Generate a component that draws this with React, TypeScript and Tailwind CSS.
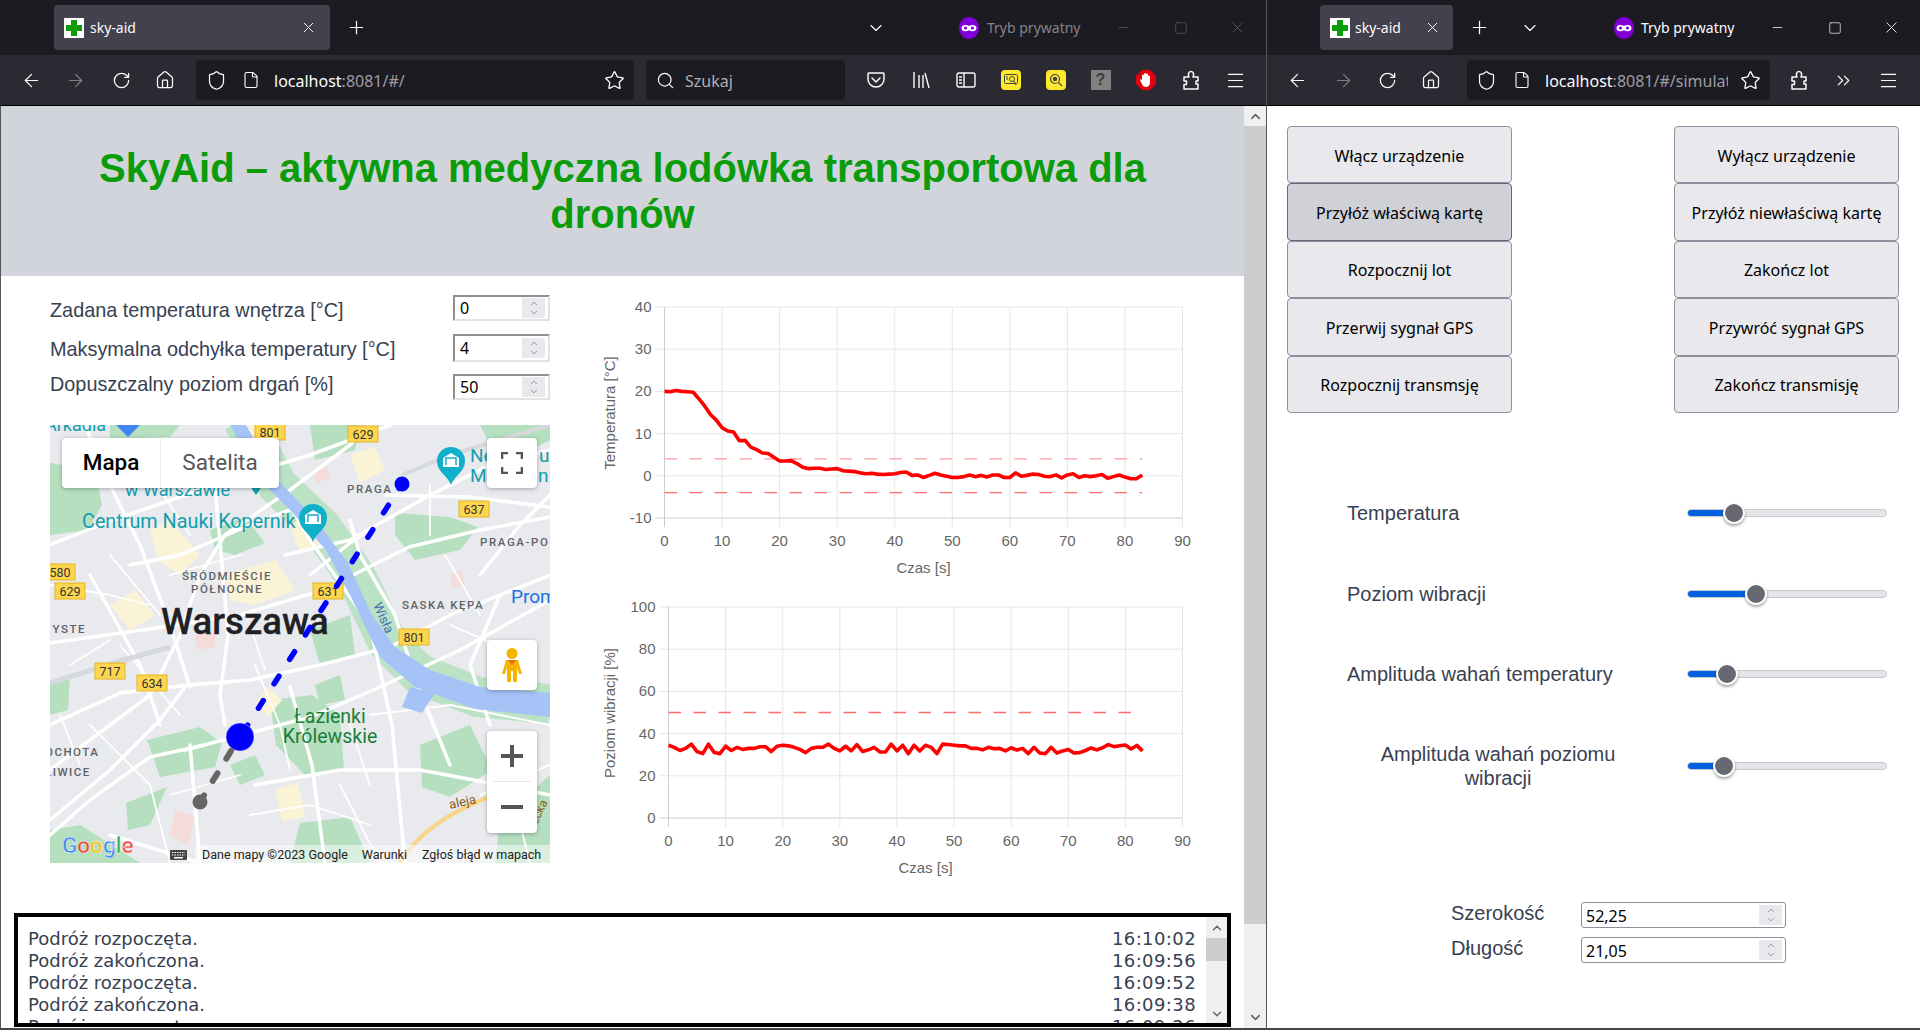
import { ChevronDown, ChevronUp, ChevronsRight, File, Home, Menu, Minus, Plus, RotateCw, Search, Shield, Square, Star, X, ArrowLeft, ArrowRight } from "lucide-react";
import type { ReactNode } from "react";

const tempData = [20, 19.9, 20.2, 20, 19.9, 19.8, 18.2, 16.5, 14.5, 13.2, 11.4, 10.6, 10.4, 8.3, 8.4, 6.8, 6.2, 5.4, 5.3, 4.4, 3.5, 3.5, 3.6, 2.9, 2, 1.7, 1.8, 1.8, 1.5, 1.6, 1.7, 1.2, 1.1, 1, 0.7, 0.5, 0.6, 0.4, 0.3, 0.4, 0.5, 0.8, 0.9, 0.1, 0.2, -0.4, 0.1, 0.6, 0.2, -0.1, -0.4, -0.4, -0.2, 0.2, -0.2, 0.1, -0.3, 0.2, 0.2, -0.4, -0.4, 0.7, -0.1, 0.1, 0.4, 0.3, -0.1, -0.2, 0.2, -0.5, 0.2, 0.5, -0.4, 0, -0.2, 0, 0.3, -0.6, -0.2, 0.2, -0.3, -0.7, -0.7, 0.2];
const vibrationData = [34.5, 33.5, 32, 33, 35, 31.5, 30.5, 35, 31, 30.5, 34, 32, 33.5, 32.5, 33, 33, 33.8, 33.8, 31.5, 34, 34.5, 34.2, 33.5, 32.5, 31, 33, 33.5, 33.5, 35, 33, 31.8, 34, 31.8, 34.8, 31.5, 32.3, 33.5, 31.3, 31.3, 35, 31.8, 34.5, 30.5, 34.5, 31.8, 34.5, 33.5, 30.5, 35, 34.8, 34.5, 34.2, 34.2, 33, 33, 32.3, 33.5, 32.8, 33, 31.8, 33.3, 32.2, 33, 30.5, 33.5, 30.8, 30.5, 33.5, 30.8, 31.8, 32.5, 30.8, 31, 32, 33.2, 32.3, 33.3, 34.8, 33.8, 34.2, 34.6, 32.7, 34.4, 31.8];

const xTicks = [0, 10, 20, 30, 40, 50, 60, 70, 80, 90];

type ChartProps = {
  data: number[];
  yTicks: number[];
  limits: { value: number; color: string; until: number }[];
  yTitle: string;
  left: number;
  top: number;
  titleY: number;
  height: number;
};

const Chart = ({ data, yTicks, limits, yTitle, left, top, titleY, height }: ChartProps) => {
  const right = 592.5;
  const bottom = top + 211;
  const max = yTicks[0];
  const min = yTicks[yTicks.length - 1];
  const sx = (v: number) => left + (v / 90) * (right - left);
  const sy = (v: number) => top + ((max - v) / (max - min)) * (bottom - top);
  const points = data.map((v, i) => `${sx(i)},${sy(v)}`).join(" ");
  return (
    <svg width="620" height={height} className="block font-['Liberation_Sans',sans-serif]">
      {yTicks.map((t) => (
        <g key={t}>
          <line x1={left - 9} x2={right} y1={sy(t)} y2={sy(t)} stroke={t === min ? "#cccccc" : "#e6e6e6"} />
          <text x={left - 13} y={sy(t) + 5} textAnchor="end" fontSize="15" fill="#666">{t}</text>
        </g>
      ))}
      {xTicks.map((t) => (
        <g key={t}>
          <line x1={sx(t)} x2={sx(t)} y1={top} y2={bottom + 9} stroke={t === 0 ? "#cccccc" : "#e6e6e6"} />
          <text x={sx(t)} y={bottom + 28} textAnchor="middle" fontSize="15" fill="#666">{t}</text>
        </g>
      ))}
      {limits.map((l) => (
        <line key={l.value} x1={sx(0)} x2={sx(l.until)} y1={sy(l.value)} y2={sy(l.value)} stroke={l.color} strokeWidth="1.3" strokeDasharray="12.5 12.5" />
      ))}
      <polyline points={points} fill="none" stroke="#ff0000" strokeWidth="3.6" strokeLinejoin="round" />
      <text x={(left + right) / 2} y={bottom + 55} textAnchor="middle" fontSize="15" fill="#666">Czas [s]</text>
      <text transform={`translate(25 ${titleY}) rotate(-90)`} textAnchor="middle" fontSize="15" fill="#666">{yTitle}</text>
    </svg>
  );
};

const shields = [
  ["801", 220, 7], ["629", 313, 9], ["637", 424, 84], ["580", 10, 147], ["629", 20, 166],
  ["631", 278, 166], ["801", 364, 212], ["717", 60, 246], ["634", 102, 258],
] as const;

const roads = [
  "0,218 100,204 190,190 273,165 359,122 430,105 500,92",
  "0,300 70,268 140,260 200,255 270,240 340,222 400,190 500,150",
  "0,345 60,300 100,270 130,210 150,150 175,110 240,65 300,20 320,0",
  "135,325 200,308 260,292 330,262 410,225 500,175",
  "140,320 150,438",
  "165,60 172,140 178,210 170,270 175,300",
  "35,0 60,60 90,120 120,200 140,262",
  "190,0 228,62 262,118 320,200 342,300 355,438",
  "240,262 262,340 275,438",
  "0,120 60,96 130,72 210,45 260,30 340,0",
  "300,95 310,130 345,190 368,262 400,340",
  "235,130 300,115 380,70 440,40 500,25",
  "335,70 420,72 500,82",
  "430,150 470,100 500,70",
  "0,395 60,345 110,295 135,262",
  "155,320 100,332 40,375 0,410",
  "205,360 290,345 370,345 440,358 500,370",
  "60,410 150,438",
  "80,140 130,130 200,100 240,85",
  "40,150 90,240 110,300",
  "450,170 420,240 440,300",
  "260,150 300,118 320,105",
];

const minorRoads = [
  "0,160 60,170 100,180", "205,240 230,300 240,345", "100,50 140,110", "395,130 430,190", "320,290 400,280 500,300",
  "40,300 100,360 120,438", "290,360 330,438", "200,390 260,380 320,400", "380,110 380,60", "450,320 480,438", "70,220 130,290",
  "120,150 190,130", "60,130 110,190", "200,200 215,245", "20,240 60,215", "400,200 470,230", "440,60 470,20",
  "10,290 30,340", "120,370 190,350", "300,300 320,360",
];

const CityMap = () => (
  <svg width="500" height="438" viewBox="0 0 500 438" className="block font-['Roboto',sans-serif]">
    <rect width="500" height="438" fill="#e8eaed" />
    {/* parki */}
    <g fill="#b5dfbf">
      <path d="M0 38 L45 45 L52 80 L38 105 L0 110Z" />
      <path d="M60 0 L130 0 L120 12 L60 14Z" />
      <path d="M160 105 L195 92 L215 118 L185 130 L165 125Z" />
      <path d="M345 88 L400 92 L428 102 L410 125 L365 135 L345 110Z" />
      <path d="M220 275 L262 270 L290 290 L294 345 L255 350 L226 320Z" />
      <path d="M97 315 L150 302 L172 318 L165 342 L110 352Z" />
      <path d="M76 378 L117 362 L100 400 L78 405Z" />
      <path d="M370 320 L420 300 L442 345 L400 372 L372 362Z" />
      <path d="M260 0 L310 0 L305 25 L265 35Z" />
      <path d="M0 405 L30 400 L90 438 L0 438Z" />
      <path d="M260 205 L300 190 L305 230 L270 240Z" />
      <path d="M180 340 L205 330 L215 350 L190 360Z" />
      <path d="M430 0 L500 0 L500 15 L450 40Z" />
      <path d="M250 398 L300 392 L320 438 L240 438Z" />
      <path d="M450 395 L500 350 L500 438 L445 438Z" />
      <path d="M0 258 L20 250 L18 285 L0 290Z" />
      <path d="M265 260 L290 250 L295 275 L270 280Z" />
    </g>
    {/* okolice rzeki */}
    <polyline points="193,-5 228,61 272,103 307,153 338,218 369,249 428,272 500,279" fill="none" stroke="#bbe2c5" strokeWidth="40" />
    <g fill="#fbf3d6">
      <path d="M60 180 L85 165 L105 190 L80 205Z" />
      <path d="M100 105 L120 95 L150 130 L130 150 L108 135Z" />
      <path d="M175 150 L225 135 L245 165 L205 180 L180 175Z" />
      <path d="M240 100 L258 90 L272 120 L250 128Z" />
      <path d="M300 30 L325 22 L335 45 L310 58Z" />
      <path d="M218 262 L232 275 L218 292 L205 278Z" />
      <path d="M225 365 L248 358 L255 392 L232 396Z" />
      <path d="M195 0 L218 0 L218 18 L198 20Z" />
    </g>
    <g fill="#f6dcd8">
      <path d="M145 210 L165 206 L165 222 L147 225Z" />
      <path d="M262 45 L276 40 L280 54 L266 58Z" />
      <path d="M400 150 L412 146 L415 160 L402 162Z" />
      <path d="M125 385 L145 392 L138 420 L120 410Z" />
    </g>
    <g fill="none" stroke="#ffffff" strokeLinecap="round" strokeLinejoin="round">
      {roads.map((r) => <polyline key={r} points={r} strokeWidth="3.5" />)}
      {minorRoads.map((r) => <polyline key={r} points={r} strokeWidth="1.8" />)}
    </g>
    <polyline points="0,258 70,236 120,222" fill="none" stroke="#d5d8dc" strokeWidth="5" />
    <polyline points="352,50 400,30 500,0" fill="none" stroke="#d5d8dc" strokeWidth="4" />
    {/* Wisła */}
    <path d="M193 -5 L228 55 L266 95 L298 138 L322 190 L345 222 L380 245 L430 262 L500 268 L500 292 L425 284 L365 262 L330 232 L300 170 L276 125 L240 85 L210 55 L180 0Z" fill="#a5c3f7" />
    <path d="M360 262 L385 268 L372 288 L352 282Z" fill="#a5c3f7" />
    <path d="M350 438 Q375 395 445 370" fill="none" stroke="#f9d48b" strokeWidth="4" />
    <path d="M430 370 L500 340" fill="none" stroke="#ffffff" strokeWidth="2" />

    {shields.map(([label, x, y]) => (
      <g key={`${label}${x}`}>
        <rect x={x - 15} y={y - 8} width="30" height="16" fill="#fdd64f" stroke="#e6b422" />
        <text x={x} y={y + 4.5} textAnchor="middle" fontSize="12.5" fill="#333">{label}</text>
      </g>
    ))}

    <text x="-5" y="6" fontSize="18" fill="#129eaf">Arkadia</text>
    <path d="M66 0 H90 L78 12Z" fill="#4285f4" />
    <text x="75" y="71" fontSize="18" fill="#129eaf">w Warszawie</text>
    <path d="M197 57 H215 L206 70Z" fill="#129eaf" />
    <text x="32" y="103" fontSize="19.8" fill="#129eaf">Centrum Nauki Kopernik</text>
    <text x="297" y="68" fontSize="11.5" letterSpacing="1.6" fontWeight="500" fill="#5f6368">PRAGA</text>
    <text x="430" y="121" fontSize="11.5" letterSpacing="1.6" fontWeight="500" fill="#5f6368">PRAGA-PO</text>
    <text x="177" y="155" textAnchor="middle" fontSize="11.5" letterSpacing="1.5" fontWeight="500" fill="#5f6368">ŚRÓDMIEŚCIE</text>
    <text x="177" y="168" textAnchor="middle" fontSize="11.5" letterSpacing="1.5" fontWeight="500" fill="#5f6368">PÓŁNOCNE</text>
    <text x="352" y="184" fontSize="11.5" letterSpacing="1.5" fontWeight="500" fill="#5f6368">SASKA KĘPA</text>
    <text x="36" y="208" textAnchor="end" fontSize="11.5" letterSpacing="1.5" fontWeight="500" fill="#5f6368">YSTE</text>
    <text x="-5" y="331" fontSize="11.5" letterSpacing="1.5" fontWeight="500" fill="#5f6368">OCHOTA</text>
    <text x="-5" y="351" fontSize="11.5" letterSpacing="1.5" fontWeight="500" fill="#5f6368">LIWICE</text>
    <text x="461" y="178" fontSize="19" fill="#1a73e8">Prom</text>
    <text transform="translate(323 180) rotate(66)" fontSize="13" fill="#3f6fb5">Wisła</text>
    <text x="111" y="209" fontSize="36.5" fontWeight="500" fill="#202124" stroke="#202124" strokeWidth="0.3">Warszawa</text>
    <text x="280" y="298" textAnchor="middle" fontSize="19.5" fill="#188038">Łazienki</text>
    <text x="280" y="318" textAnchor="middle" fontSize="19.5" fill="#188038">Królewskie</text>
    <text x="420" y="37" fontSize="19" fill="#129eaf">Ne</text>
    <text x="420" y="57" fontSize="19" fill="#129eaf">M</text>
    <text x="489" y="37" fontSize="19" fill="#129eaf">u</text>
    <text x="488" y="57" fontSize="19" fill="#129eaf">n</text>
    <text transform="translate(400 384) rotate(-12)" fontSize="13" fill="#8a5a1c">aleja</text>
    <text transform="translate(487 400) rotate(-65)" fontSize="12" fill="#8a5a1c">ecka</text>

    {[[401, 36], [263, 93]].map(([x, y]) => (
      <g key={x}>
        <path d={`M${x} ${y + 24} C${x - 3} ${y + 15} ${x - 14} ${y + 11} ${x - 14} ${y} A14 14 0 1 1 ${x + 14} ${y} C${x + 14} ${y + 11} ${x + 3} ${y + 15} ${x} ${y + 24}Z`} fill="#10afca" />
        <path d={`M${x - 8} ${y + 6} V${y - 3} L${x} ${y - 8} L${x + 8} ${y - 3} V${y + 6}Z`} fill="#ffffff" />
        <path d={`M${x - 5} ${y + 4} V${y - 3} H${x + 5} V${y + 4}`} fill="none" stroke="#10afca" strokeWidth="1.5" />
      </g>
    ))}

    {/* trasa drona */}
    <line x1="352" y1="59" x2="190" y2="312" stroke="#0000ff" strokeWidth="5.5" strokeLinecap="round" strokeDasharray="9 20" strokeDashoffset="3.8" />
    <circle cx="352" cy="59" r="7.5" fill="#0000ff" />
    <circle cx="190" cy="312" r="14" fill="#0000ff" stroke="#ffffff" strokeOpacity="0.4" strokeWidth="1" />
    <line x1="181" y1="326" x2="150" y2="377" stroke="#666666" strokeWidth="6" strokeLinecap="round" strokeDasharray="9 17" />
    <circle cx="150" cy="377" r="7.5" fill="#666666" />

    <text x="12" y="428" fontSize="22.5" fontWeight="500" stroke="#ffffff" strokeWidth="0.4">
      <tspan fill="#4285f4">G</tspan><tspan fill="#ea4335">o</tspan><tspan fill="#fbbc05">o</tspan><tspan fill="#4285f4">g</tspan><tspan fill="#34a853">l</tspan><tspan fill="#ea4335">e</tspan>
    </text>
  </svg>
);

const Pegman = () => (
  <svg width="22" height="36" viewBox="0 0 22 36">
    <circle cx="11" cy="6.5" r="5.5" fill="#f4b400" />
    <path d="M5 13 H17 L21 27 H18 L16 20 V35 H12 V24 H10 V35 H6 V20 L4 27 H1Z" fill="#f4b400" />
    <path d="M7 13 H15 L11 18Z" fill="#e37400" />
  </svg>
);

const MapPanel = () => (
  <div className="relative w-[500px] h-[438px] overflow-hidden mt-[25px]">
    <CityMap />
    <div className="absolute left-[12px] top-[13px] flex h-[50px] w-[217px] bg-white rounded-sm shadow-[0_1px_4px_rgba(0,0,0,0.3)] font-['Roboto',sans-serif] text-[22.5px]">
      <div className="w-[99px] flex items-center justify-center font-medium text-black border-r border-[#eeeeee]">Mapa</div>
      <div className="flex-1 flex items-center justify-center text-[#565656]">Satelita</div>
    </div>
    <div className="absolute left-[437px] top-[13px] w-[50px] h-[50px] bg-white rounded-sm shadow-[0_1px_4px_rgba(0,0,0,0.3)] flex items-center justify-center">
      <svg width="22" height="22" viewBox="0 0 22 22" fill="none" stroke="#555" strokeWidth="2.6">
        <path d="M1 7 V1 H7 M15 1 H21 V7 M21 15 V21 H15 M7 21 H1 V15" />
      </svg>
    </div>
    <div className="absolute left-[437px] top-[215px] w-[50px] h-[50px] bg-white rounded-sm shadow-[0_1px_4px_rgba(0,0,0,0.3)] flex items-center justify-center">
      <Pegman />
    </div>
    <div className="absolute left-[437px] top-[306px] w-[50px] h-[102px] bg-white rounded-sm shadow-[0_1px_4px_rgba(0,0,0,0.3)] flex flex-col items-center">
      <div className="h-[50px] w-full flex items-center justify-center">
        <svg width="22" height="22" viewBox="0 0 22 22" fill="#555"><path d="M9 0 H13 V9 H22 V13 H13 V22 H9 V13 H0 V9 H9Z" /></svg>
      </div>
      <div className="w-[38px] h-px bg-[#e6e6e6]" />
      <div className="h-[50px] w-full flex items-center justify-center">
        <svg width="22" height="4" viewBox="0 0 22 4" fill="#555"><rect width="22" height="4" /></svg>
      </div>
    </div>
    <div className="absolute right-0 bottom-0 left-[145px] h-[18px] pt-[3px] bg-white/50 flex items-center font-['Roboto',sans-serif] text-[12.5px] text-[#222] whitespace-nowrap">
      <span className="ml-[7px]">Dane mapy ©2023 Google</span>
      <span className="ml-[14px]">Warunki</span>
      <span className="ml-[15px]">Zgłoś błąd w mapach</span>
    </div>
    <svg className="absolute left-[120px] bottom-[3px]" width="17" height="10" viewBox="0 0 17 10">
      <rect width="17" height="10" rx="1" fill="#444" />
      <path d="M2 2.5 H15 M2 5 H15" stroke="#fff" strokeWidth="1" strokeDasharray="1.5 1" />
      <rect x="4" y="7" width="9" height="1.5" fill="#fff" />
    </svg>
  </div>
);

const Favicon = () => (
  <svg width="20" height="20" viewBox="0 0 20 20" className="shrink-0">
    <rect width="20" height="20" fill="#ffffff" />
    <path d="M7 2 H13 V7 H18 V13 H13 V18 H7 V13 H2 V7 H7Z" fill="#0a9c0a" />
  </svg>
);

const PrivateIcon = () => (
  <svg width="20" height="22" viewBox="0 0 20 22" className="shrink-0">
    <ellipse cx="10" cy="11" rx="10" ry="11" fill="#8000d7" />
    <path d="M2.5 11 C3 7.5 7 7.5 10 9 C13 7.5 17 7.5 17.5 11 C17.5 14.5 13 15 10 13.2 C7 15 2.5 14.5 2.5 11Z" fill="#ffffff" />
    <circle cx="6.5" cy="11" r="1.6" fill="#8000d7" />
    <circle cx="13.5" cy="11" r="1.6" fill="#8000d7" />
  </svg>
);

const ToolIcon = ({ children, className = "w-[44px]" }: { children: ReactNode; className?: string }) => (
  <div className={`${className} h-full shrink-0 flex items-center justify-center text-[#fbfbfe]`}>{children}</div>
);

const Pocket = () => (
  <svg width="18" height="18" viewBox="0 0 18 18" fill="none" stroke="#fbfbfe" strokeWidth="1.5">
    <path d="M2 2 H16 A1 1 0 0 1 17 3 V8 A8 8 0 0 1 1 8 V3 A1 1 0 0 1 2 2Z" />
    <path d="M5 7 L9 11 L13 7" strokeLinecap="round" />
  </svg>
);

const Library = () => (
  <svg width="18" height="18" viewBox="0 0 18 18" fill="none" stroke="#fbfbfe" strokeWidth="1.4">
    <path d="M2 1 V17 M7 4 V17 M11 4 V17 M13 2 L17 17" />
  </svg>
);

const Sidebar = () => (
  <svg width="20" height="16" viewBox="0 0 20 16" fill="none" stroke="#fbfbfe" strokeWidth="1.4">
    <rect x="1" y="1" width="18" height="14" rx="2" />
    <path d="M8 1 V15" />
    <path d="M3 5 H6 M3 8 H6 M3 11 H6" />
  </svg>
);

const PuzzlePiece = () => (
  <svg width="18" height="20" viewBox="0 0 18 20" fill="none" stroke="#fbfbfe" strokeWidth="1.5" strokeLinejoin="round">
    <path d="M2 19 V14.5 H4.5 V11 H2 V7 H7 C6 5 6 1.5 9 1.5 C12 1.5 12 5 11 7 H16 V11 H14 V14 H16 V19Z" />
  </svg>
);

const YellowScreen = () => (
  <div className="w-[20px] h-[20px] rounded-[4px] bg-[#ffe92e] flex items-center justify-center">
    <svg width="14" height="12" viewBox="0 0 14 12" fill="none" stroke="#444" strokeWidth="1">
      <rect x="0.5" y="0.5" width="13" height="9" rx="1" />
      <circle cx="8" cy="5" r="2.5" />
      <path d="M10 7 L12 11 M2 3 H4 M2 5 H4" />
    </svg>
  </div>
);

const YellowLens = () => (
  <div className="w-[20px] h-[20px] rounded-[4px] bg-[#ffe92e] flex items-center justify-center">
    <svg width="14" height="14" viewBox="0 0 14 14" fill="none" stroke="#444" strokeWidth="1.2">
      <circle cx="6" cy="6" r="4.5" />
      <circle cx="6" cy="6" r="1.6" fill="#444" />
      <path d="M9.5 9.5 L13 13" />
    </svg>
  </div>
);

const StopHand = () => (
  <svg width="20" height="20" viewBox="0 0 20 20">
    <path d="M6 0 H14 L20 6 V14 L14 20 H6 L0 14 V6Z" fill="#e3000f" />
    <path d="M6 9 V5 Q7 3.8 8 5 V8 V3.5 Q9 2.5 10 3.5 V8 V4 Q11 3 12 4 V9 V6 Q13 5 14 6 V12 Q14 17 10 17 Q7 17 6 14 L4 10 Q5 8.5 6 10Z" fill="#ffffff" />
  </svg>
);

const WindowControls = ({ color }: { color: string }) => (
  <div className={`ml-auto flex h-full shrink-0 ${color}`}>
    <div className="w-[57px] flex items-center justify-center"><Minus size={15} strokeWidth={1.2} /></div>
    <div className="w-[57px] flex items-center justify-center"><Square size={14} strokeWidth={1.2} /></div>
    <div className="w-[57px] flex items-center justify-center"><X size={19} strokeWidth={1.1} /></div>
  </div>
);

const Spinner = () => (
  <div className="w-[23px] h-[20px] bg-[#e9e9ed] flex flex-col items-center justify-center text-[#8f8f9d] shrink-0 mr-[3px]">
    <ChevronUp size={12} strokeWidth={2} className="-mb-[1px]" />
    <ChevronDown size={12} strokeWidth={2} className="-mt-[1px]" />
  </div>
);

const NumberField = ({ value, height }: { value: string; height: string }) => (
  <div className={`${height} w-[97px] border-2 border-t-[#8f8f8f] border-l-[#8f8f8f] border-r-[#e3e3e3] border-b-[#e3e3e3] flex items-center justify-between bg-white`}>
    <span className="ml-[5px] text-[16px] text-black font-['Noto_Sans',sans-serif]">{value}</span>
    <Spinner />
  </div>
);

const CoordField = ({ value, height }: { value: string; height: string }) => (
  <div className={`${height} w-[205px] border border-[#8f8f9d] rounded-[3px] flex items-center justify-between bg-white`}>
    <span className="ml-[4px] mt-[2px] text-[16px] text-black font-['Noto_Sans',sans-serif]">{value}</span>
    <Spinner />
  </div>
);

const formRows = [
  { label: "Zadana temperatura wnętrza [°C]", value: "0", rowClass: "mt-[19px] h-[26px]", labelClass: "pt-[6px]", fieldHeight: "h-[26px]" },
  { label: "Maksymalna odchyłka temperatury [°C]", value: "4", rowClass: "mt-[13px] h-[28px]", labelClass: "pt-[4px]", fieldHeight: "h-[28px]" },
  { label: "Dopuszczalny poziom drgań [%]", value: "50", rowClass: "mt-[12px] h-[26px]", labelClass: "pb-[4px]", fieldHeight: "h-[26px]" },
];

const logRows = [
  ["Podróż rozpoczęta.", "16:10:02"],
  ["Podróż zakończona.", "16:09:56"],
  ["Podróż rozpoczęta.", "16:09:52"],
  ["Podróż zakończona.", "16:09:38"],
  ["Podróż rozpoczęta.", "16:09:26"],
];

const LeftWindow = () => (
  <div className="w-[1266px] shrink-0 flex flex-col h-full">
    <div className="h-[55px] bg-[#1c1b22] flex items-start text-[#fbfbfe] font-['Noto_Sans',sans-serif]">
      <div className="ml-[54px] mt-[5px] w-[276px] h-[45px] rounded-[4px] bg-[#42414d] flex items-center pl-[10px] pr-[13px] shrink-0">
        <Favicon />
        <span className="ml-[6px] text-[14px]">sky-aid</span>
        <X size={17} strokeWidth={1.4} className="ml-auto" />
      </div>
      <div className="w-[52px] h-full flex items-center justify-center shrink-0"><Plus size={21} strokeWidth={1.4} /></div>
      <div className="ml-[474px] w-[40px] h-full flex items-center justify-center shrink-0"><ChevronDown size={20} strokeWidth={1.4} /></div>
      <div className="ml-[63px] h-full flex items-center shrink-0">
        <PrivateIcon />
        <span className="ml-[8px] text-[14px] text-[#85848c]">Tryb prywatny</span>
      </div>
      <WindowControls color="text-[#5b5b66]" />
    </div>
    <div className="h-[51px] bg-[#2b2a33] flex items-center pl-[9px] font-['Noto_Sans',sans-serif] border-b border-black">
      <ToolIcon><ArrowLeft size={21} strokeWidth={1.4} /></ToolIcon>
      <ToolIcon className="w-[44px] opacity-40"><ArrowRight size={21} strokeWidth={1.4} /></ToolIcon>
      <ToolIcon className="w-[44px] ml-[2px]"><RotateCw size={19} strokeWidth={1.6} /></ToolIcon>
      <ToolIcon><Home size={20} strokeWidth={1.5} /></ToolIcon>
      <div className="ml-[9px] w-[438px] h-[40px] rounded-[4px] bg-[#1c1b22] flex items-center shrink-0 text-[#fbfbfe]">
        <Shield size={21} strokeWidth={1.4} className="ml-[10px]" />
        <File size={18} strokeWidth={1.5} className="ml-[15px]" />
        <span className="ml-[14px] mt-[1px] text-[16px]">localhost<span className="text-[#9d9da3]">:8081/#/</span></span>
        <Star size={21} strokeWidth={1.5} className="ml-auto mr-[9px]" />
      </div>
      <div className="ml-[12px] w-[199px] h-[40px] rounded-[4px] bg-[#1c1b22] flex items-center shrink-0 text-[#fbfbfe]">
        <Search size={19} strokeWidth={1.5} className="ml-[10px]" />
        <span className="ml-[10px] mt-[1px] text-[16px] text-[#b0b0b5]">Szukaj</span>
      </div>
      <ToolIcon className="w-[45px] ml-[8px]"><Pocket /></ToolIcon>
      <ToolIcon className="w-[45px]"><Library /></ToolIcon>
      <ToolIcon className="w-[45px]"><Sidebar /></ToolIcon>
      <ToolIcon className="w-[45px]"><YellowScreen /></ToolIcon>
      <ToolIcon className="w-[45px]"><YellowLens /></ToolIcon>
      <ToolIcon className="w-[45px]">
        <div className="w-[20px] h-[20px] bg-[#808080] flex items-center justify-center text-[#3a3a3a] font-bold text-[16px] font-['Liberation_Sans',sans-serif]">?</div>
      </ToolIcon>
      <ToolIcon className="w-[45px]"><StopHand /></ToolIcon>
      <ToolIcon className="w-[45px]"><PuzzlePiece /></ToolIcon>
      <ToolIcon className="w-[45px]"><Menu size={21} strokeWidth={1.4} /></ToolIcon>
    </div>
    <div className="flex-1 flex min-h-0 border-l border-[#555555] border-b-2 border-b-[#444444]">
      <div className="w-[1243px] shrink-0 flex flex-col overflow-hidden bg-white">
        <header className="h-[170px] shrink-0 bg-[#d1d5db] flex items-center justify-center">
          <h1 className="w-[1100px] text-center text-[40px] leading-[46.5px] font-bold text-[#0a9c0a]">
            SkyAid – aktywna medyczna lodówka transportowa dla dronów
          </h1>
        </header>
        <div className="flex shrink-0">
          <div className="ml-[49px] w-[500px] flex flex-col">
            {formRows.map((row) => (
              <div key={row.label} className={`${row.rowClass} flex items-center justify-between`}>
                <span className={`${row.labelClass} text-[19.85px] text-[#374151]`}>{row.label}</span>
                <NumberField value={row.value} height={row.fieldHeight} />
              </div>
            ))}
            <MapPanel />
          </div>
          <div className="ml-[40px] mt-[14px] flex flex-col">
            <Chart
              data={tempData}
              yTicks={[40, 30, 20, 10, 0, -10]}
              limits={[
                { value: 4, color: "#ff9a9a", until: 83 },
                { value: -4, color: "#ff6b6b", until: 83 },
              ]}
              yTitle="Temperatura [°C]"
              left={74.5}
              top={17}
              titleY={123}
              height={290}
            />
            <Chart
              data={vibrationData}
              yTicks={[100, 80, 60, 40, 20, 0]}
              limits={[{ value: 50, color: "#ff6b6b", until: 81 }]}
              yTitle="Poziom wibracji [%]"
              left={78.5}
              top={27}
              titleY={133}
              height={300}
            />
          </div>
        </div>
        <div className="ml-[13px] mt-[33px] w-[1217px] h-[114px] shrink-0 border-4 border-black flex overflow-hidden">
          <div className="flex-1 pt-[11px] pl-[10px] pr-[10px] font-['DejaVu_Sans',sans-serif] text-[18px] leading-[22px] text-[#374151] whitespace-nowrap">
            {logRows.map(([text, time]) => (
              <div key={time} className="flex justify-between">
                <span>{text}</span>
                <span className="tracking-[0.4px]">{time}</span>
              </div>
            ))}
          </div>
          <div className="w-[21px] bg-[#f0f0f0] flex flex-col items-center text-[#606060]">
            <ChevronUp size={14} strokeWidth={2.4} className="mt-[4px]" />
            <div className="w-full h-[23px] mt-[3px] bg-[#cdcdcd]" />
            <ChevronDown size={14} strokeWidth={2.4} className="mt-auto mb-[2px]" />
          </div>
        </div>
      </div>
      <div className="w-[22px] bg-[#f0f0f0] flex flex-col items-center text-[#606060]">
        <ChevronUp size={15} strokeWidth={2.4} className="mt-[3px]" />
        <div className="w-full h-[798px] mt-[2px] bg-[#cdcdcd]" />
        <ChevronDown size={15} strokeWidth={2.4} className="mt-auto mb-[3px]" />
      </div>
    </div>
  </div>
);

const buttons = [
  ["Włącz urządzenie", "Wyłącz urządzenie"],
  ["Przyłóż właściwą kartę", "Przyłóż niewłaściwą kartę"],
  ["Rozpocznij lot", "Zakończ lot"],
  ["Przerwij sygnał GPS", "Przywróć sygnał GPS"],
  ["Rozpocznij transmsję", "Zakończ transmisję"],
];

const sliders = [
  { label: "Temperatura", fill: "w-[47px]", thumb: "left-[47px]", rowClass: "" },
  { label: "Poziom wibracji", fill: "w-[69px]", thumb: "left-[69px]", rowClass: "" },
  { label: "Amplituda wahań temperatury", fill: "w-[40px]", thumb: "left-[40px]", rowClass: "" },
  { label: "Amplituda wahań poziomu wibracji", fill: "w-[37px]", thumb: "left-[37px]", rowClass: "mt-[11px] text-center" },
];

const ActionButton = ({ label, pressed }: { label: string; pressed: boolean }) => (
  <button className={`w-[225px] h-[57.4px] rounded-[4px] border text-[16px] text-black font-['Noto_Sans',sans-serif] ${pressed ? "bg-[#d0d0d7] border-[#676774]" : "bg-[#e9e9ed] border-[#8f8f9d]"}`}>
    <span className="relative top-[1px]">{label}</span>
  </button>
);

const RightWindow = () => (
  <div className="flex-1 border-l border-[#55555c] flex flex-col h-full">
    <div className="h-[55px] bg-[#1c1b22] flex items-start text-[#fbfbfe] font-['Noto_Sans',sans-serif]">
      <div className="ml-[53px] mt-[5px] w-[133px] h-[45px] rounded-[4px] bg-[#42414d] flex items-center pl-[10px] pr-[12px] shrink-0">
        <Favicon />
        <span className="ml-[5px] text-[14px]">sky-aid</span>
        <X size={17} strokeWidth={1.4} className="ml-auto" />
      </div>
      <div className="w-[52px] h-full flex items-center justify-center shrink-0"><Plus size={21} strokeWidth={1.4} /></div>
      <div className="ml-[5px] w-[40px] h-full flex items-center justify-center shrink-0"><ChevronDown size={20} strokeWidth={1.4} /></div>
      <div className="ml-[64px] h-full flex items-center shrink-0">
        <PrivateIcon />
        <span className="ml-[7px] text-[14px]">Tryb prywatny</span>
      </div>
      <WindowControls color="text-[#fbfbfe]" />
    </div>
    <div className="h-[51px] bg-[#2b2a33] flex items-center pl-[8px] font-['Noto_Sans',sans-serif] border-b border-black">
      <ToolIcon><ArrowLeft size={21} strokeWidth={1.4} /></ToolIcon>
      <ToolIcon className="w-[44px] ml-[2px] opacity-40"><ArrowRight size={21} strokeWidth={1.4} /></ToolIcon>
      <ToolIcon><RotateCw size={19} strokeWidth={1.6} /></ToolIcon>
      <ToolIcon><Home size={20} strokeWidth={1.5} /></ToolIcon>
      <div className="ml-[14px] w-[303px] h-[40px] rounded-[4px] bg-[#1c1b22] flex items-center shrink-0 text-[#fbfbfe] overflow-hidden">
        <Shield size={21} strokeWidth={1.4} className="ml-[9px] shrink-0" />
        <File size={18} strokeWidth={1.5} className="ml-[16px] shrink-0" />
        <span className="ml-[14px] mt-[1px] text-[16px] whitespace-nowrap w-[183px] overflow-hidden">localhost<span className="text-[#9d9da3]">:8081/#/simulat</span></span>
        <Star size={21} strokeWidth={1.5} className="ml-auto mr-[9px] shrink-0" />
      </div>
      <ToolIcon className="w-[44px] ml-[7px]"><PuzzlePiece /></ToolIcon>
      <ToolIcon><ChevronsRight size={21} strokeWidth={1.4} /></ToolIcon>
      <ToolIcon className="w-[44px] ml-[1px]"><Menu size={21} strokeWidth={1.4} /></ToolIcon>
    </div>
    <div className="flex-1 bg-white font-['Liberation_Sans',sans-serif] text-[20px] text-[#374151] border-b-2 border-b-[#444444]">
      <div className="pt-[20px] pl-[20px] flex gap-[162px]">
        {[0, 1].map((col) => (
          <div key={col} className="flex flex-col">
            {buttons.map((pair, row) => (
              <ActionButton key={pair[col]} label={pair[col]} pressed={col === 0 && row === 1} />
            ))}
          </div>
        ))}
      </div>
      <div className="mt-[60px] pl-[80px]">
        {sliders.map((s) => (
          <div key={s.label} className={`h-[80.5px] flex items-center ${s.rowClass}`}>
            <div className="w-[302px] leading-[24px]">{s.label}</div>
            <div className="ml-[38px] relative w-[200px] h-[8px] rounded-full bg-[#e5e5ea] border border-[#c8c8ce]">
              <div className={`${s.fill} h-full rounded-l-full bg-[#0060df]`} />
              <div className={`${s.thumb} absolute top-1/2 -translate-y-1/2 -ml-[1px] w-[22px] h-[22px] -translate-x-1/2 rounded-full bg-[#686873] border-2 border-white shadow-[0_2px_3px_rgba(0,0,0,0.35)]`} />
            </div>
          </div>
        ))}
      </div>
      <div className="mt-[96px] pl-[184px] flex flex-col">
        <div className="flex items-start h-[35px]">
          <span className="w-[130px] -mt-[4px]">Szerokość</span>
          <CoordField value="52,25" height="h-[26px]" />
        </div>
        <div className="flex items-start">
          <span className="w-[130px] -mt-[4px]">Długość</span>
          <CoordField value="21,05" height="h-[26px]" />
        </div>
      </div>
    </div>
  </div>
);

export default function App() {
  return (
    <div className="w-[1920px] h-[1030px] flex overflow-hidden font-['Liberation_Sans',sans-serif] bg-white">
      <LeftWindow />
      <RightWindow />
    </div>
  );
}
